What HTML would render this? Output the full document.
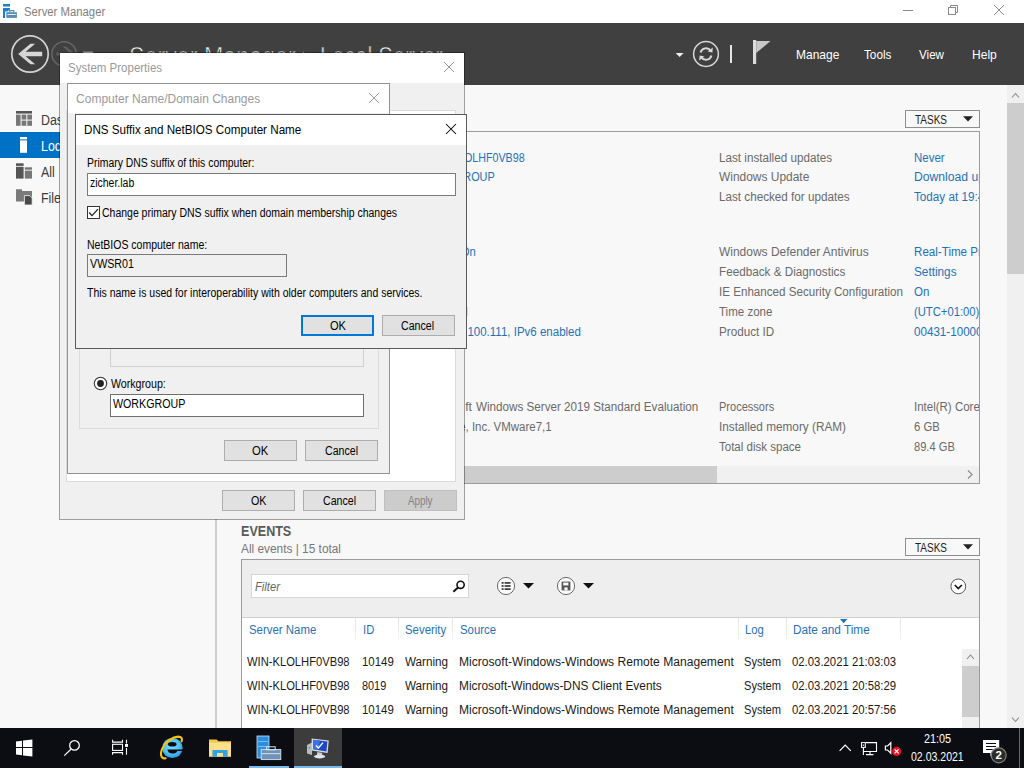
<!DOCTYPE html>
<html><head><meta charset="utf-8"><title>Server Manager</title>
<style>
*{box-sizing:border-box;margin:0;padding:0}
html,body{width:1024px;height:768px;overflow:hidden;background:#f8f8f8;font-family:"Liberation Sans",sans-serif;}
.a{position:absolute}
.t{position:absolute;white-space:nowrap;line-height:1}
svg{position:absolute;overflow:visible}
.btn{position:absolute;background:#e1e1e1;border:1px solid #adadad}
</style></head><body>

<!-- ===== main window ===== -->
<div class="a" style="left:0;top:0;width:1024px;height:23px;background:#fff"></div>
<!-- app icon -->
<svg style="left:0;top:0" width="20" height="22" viewBox="0 0 20 22">
<rect x="3" y="4" width="7" height="2.5" fill="#1b7fd0"/>
<path d="M3 8 H10 V9.4 L7.2 11.6 H5 V17.9 H3 Z" fill="#1b7fd0"/>
<rect x="6.3" y="12.2" width="10.6" height="5.7" fill="#5a8db5"/>
<path d="M9.6 12.2 V10.6 H13.8 V12.2" fill="none" stroke="#5a8db5" stroke-width="1.1"/>
<path d="M7 14 H16.2 L15.4 15 H7.8 Z" fill="#e6eef5"/>
</svg>
<!-- window controls -->
<svg style="left:900px;top:0" width="124" height="23" viewBox="0 0 124 23" fill="none" stroke="#8a8a8a" stroke-width="1">
<path d="M3 10.5H13"/><rect x="48.5" y="7.5" width="7" height="7"/><path d="M50.5 7.5V5.5H57.5V12.5H55.5"/><path d="M94 5L104 15M104 5L94 15"/>
</svg>
<!-- header -->
<div class="a" style="left:0;top:23px;width:1024px;height:62px;background:#404040"></div>
<svg style="left:0;top:23px" width="320" height="62" viewBox="0 23 320 62">
<circle cx="30" cy="54" r="18.2" fill="none" stroke="#d2d2d2" stroke-width="1.7"/>
<path d="M18.2 54 L30.5 43.8 H35.2 L25.6 51.8 H42.2 V56.2 H25.6 L35.2 64.2 H30.5 Z" fill="#d6d6d6"/>
<circle cx="64.1" cy="53.9" r="12.2" fill="none" stroke="#666" stroke-width="1.5"/>
<path d="M75 54 L66 46.5 H62.6 L69.6 52.4 H56.5 V55.6 H69.6 L62.6 61.5 H66 Z" fill="#5e5e5e"/>
<path d="M82.5 51.7 H93.7 L88 57.4 Z" fill="#d4d4d4"/>
<path d="M302.8 51.4 L309.4 58 L302.8 64.6 Z" fill="#dcdcdc"/>
</svg>
<svg style="left:664px;top:23px" width="128" height="62" viewBox="664 23 128 62">
<path d="M675.6 53 H683.6 L679.6 57 Z" fill="#f0f0f0"/>
<circle cx="706" cy="54" r="12.4" fill="none" stroke="#d8d8d8" stroke-width="1.5"/>
<path d="M700.6 52.6 A5.6 5.6 0 0 1 710.6 50.6" fill="none" stroke="#d8d8d8" stroke-width="2"/>
<path d="M711.4 55.4 A5.6 5.6 0 0 1 701.4 57.4" fill="none" stroke="#d8d8d8" stroke-width="2"/>
<path d="M712.8 47.4 L712.4 52.6 L707.6 51.4 Z" fill="#d8d8d8"/>
<path d="M699.2 60.6 L699.6 55.4 L704.4 56.6 Z" fill="#d8d8d8"/>
<rect x="730" y="45" width="2" height="18" fill="#e6e6e6"/>
<rect x="753" y="40" width="3.2" height="24" fill="#dcdcdc"/>
<path d="M756.2 41 H770.5 L756.2 53 Z" fill="#c8c8c8"/>
</svg>
<div class="a" style="left:217px;top:85px;width:790px;height:1px;background:#fcfcfc"></div>
<!-- sidebar -->
<div class="a" style="left:0;top:132px;width:215px;height:26px;background:#0072c6"></div>
<div class="a" style="left:215px;top:85px;width:2px;height:643px;background:#cdcdcd"></div>
<svg style="left:16px;top:111px" width="16" height="95" viewBox="16 111 16 95">
<!-- dashboard -->
<rect x="16" y="111" width="16" height="2.6" fill="#555"/>
<rect x="16" y="114.6" width="4.6" height="11.2" fill="#777"/><rect x="21.6" y="114.6" width="4.7" height="5" fill="#777"/><rect x="27.3" y="114.6" width="4.7" height="5" fill="#777"/><rect x="21.6" y="120.6" width="4.7" height="5.2" fill="#777"/><rect x="27.3" y="120.6" width="4.7" height="5.2" fill="#777"/>
<!-- local -->
<rect x="20" y="137" width="7" height="2.4" fill="#fff"/><rect x="20" y="140.4" width="7" height="12.4" fill="#fff"/>
<!-- all servers -->
<rect x="16" y="163.3" width="7.6" height="2.6" fill="#555"/><rect x="16" y="166.8" width="7.6" height="11.8" fill="#555"/>
<rect x="24.8" y="167.3" width="7.2" height="2.4" fill="#777"/><rect x="24.8" y="170.6" width="7.2" height="8" fill="#777"/>
<!-- file -->
<path d="M16 189.3 H22 V191 H32 V201.5 H16 Z" fill="#7a7a7a"/>
<path d="M24.4 195.6 H29.8 L32.2 198 V205 H24.4 Z" fill="#4a4a4a" stroke="#f8f8f8" stroke-width="0.8"/>
</svg>
<!-- main scrollbar -->
<div class="a" style="left:1007px;top:85px;width:17px;height:643px;background:#f0f0f0"></div>
<div class="a" style="left:1007px;top:103px;width:17px;height:171px;background:#cdcdcd"></div>
<svg style="left:1007px;top:85px" width="17" height="643" viewBox="1007 85 17 643" fill="none" stroke="#8a8a8a" stroke-width="1.1">
<path d="M1012 97.5 L1015.5 93.5 L1019 97.5"/><path d="M1012 717.5 L1015.5 721.5 L1019 717.5"/>
</svg>
<!-- properties panel -->
<div class="a" style="left:236px;top:131px;width:744px;height:353px;border:1px solid #9b9b9b;background:#f8f8f8"></div>
<div class="a" style="left:237px;top:466px;width:742px;height:17px;background:#f0f0f0"></div>
<div class="a" style="left:254px;top:466px;width:463px;height:17px;background:#cdcdcd"></div>
<svg style="left:960px;top:466px" width="17" height="17" viewBox="0 0 17 17" fill="none" stroke="#8a8a8a" stroke-width="1.1"><path d="M8 4.5 L12 8.5 L8 12.5"/></svg>
<!-- TASKS buttons -->
<div class="a" style="left:905px;top:110px;width:75px;height:18px;border:1px solid #8e8e8e;background:#f8f8f8"></div>
<div class="a" style="left:905px;top:538px;width:75px;height:18px;border:1px solid #8e8e8e;background:#f8f8f8"></div>
<svg style="left:963px;top:116px" width="10" height="6" viewBox="0 0 10 6"><path d="M0 0.3H10L5 5.4Z" fill="#222"/></svg>
<svg style="left:963px;top:544px" width="10" height="6" viewBox="0 0 10 6"><path d="M0 0.3H10L5 5.4Z" fill="#222"/></svg>
<!-- events box -->
<div class="a" style="left:241px;top:559px;width:739px;height:170px;border:1px solid #9b9b9b;background:#fff"></div>
<div class="a" style="left:242px;top:560px;width:737px;height:58px;background:#eeeeee;border-bottom:1px solid #cfcfcf"></div>
<div class="a" style="left:251px;top:574px;width:218px;height:24px;background:#fff;border:1px solid #d6d6d6"></div>
<svg style="left:452px;top:580px" width="14" height="13" viewBox="0 0 14 13" fill="none" stroke="#111" stroke-width="1.6"><circle cx="8.6" cy="4.8" r="3.6"/><path d="M6 7.6 L1.4 11.8" stroke-width="2"/></svg>
<svg style="left:496px;top:576px" width="110" height="20" viewBox="496 576 110 20">
<circle cx="506" cy="586" r="8.6" fill="#fafafa" stroke="#6a6a6a" stroke-width="1"/>
<g fill="#444"><rect x="501.6" y="582" width="2" height="1.8"/><rect x="504.6" y="582" width="6" height="1.8"/><rect x="501.6" y="585.1" width="2" height="1.8"/><rect x="504.6" y="585.1" width="6" height="1.8"/><rect x="501.6" y="588.2" width="2" height="1.8"/><rect x="504.6" y="588.2" width="6" height="1.8"/></g>
<path d="M523 583 H534 L528.5 588.6 Z" fill="#111"/>
<circle cx="566" cy="586" r="8.6" fill="#fafafa" stroke="#6a6a6a" stroke-width="1"/>
<path d="M561.6 581.6 H570.4 V590.4 H561.6 Z" fill="#555"/><rect x="563.2" y="582.6" width="5.2" height="2.8" fill="#fafafa"/><rect x="564.4" y="587.4" width="3.2" height="3" fill="#fafafa"/>
<path d="M583 583 H594 L588.5 588.6 Z" fill="#111"/>
</svg>
<svg style="left:948px;top:577px" width="20" height="20" viewBox="948 577 20 20"><circle cx="958.3" cy="586.4" r="7.4" fill="#fff" stroke="#555" stroke-width="1"/><path d="M954.8 585 L958.3 588.6 L961.8 585" fill="none" stroke="#111" stroke-width="1.6"/></svg>
<!-- column separators -->
<div class="a" style="left:355px;top:618px;width:1px;height:22px;background:linear-gradient(#e3e3e3,#f4f4f4)"></div>
<div class="a" style="left:398px;top:618px;width:1px;height:22px;background:linear-gradient(#e3e3e3,#f4f4f4)"></div>
<div class="a" style="left:452px;top:618px;width:1px;height:22px;background:linear-gradient(#e3e3e3,#f4f4f4)"></div>
<div class="a" style="left:738px;top:618px;width:1px;height:22px;background:linear-gradient(#e3e3e3,#f4f4f4)"></div>
<div class="a" style="left:786px;top:618px;width:1px;height:22px;background:linear-gradient(#e3e3e3,#f4f4f4)"></div>
<div class="a" style="left:900px;top:618px;width:1px;height:22px;background:linear-gradient(#e3e3e3,#f4f4f4)"></div>
<svg style="left:840px;top:619px" width="8" height="5" viewBox="0 0 8 5"><path d="M0 0H7.4L3.7 4.2Z" fill="#1f72b8"/></svg>
<!-- inner scrollbar -->
<div class="a" style="left:962px;top:649px;width:17px;height:79px;background:#f0f0f0"></div>
<div class="a" style="left:962px;top:666px;width:17px;height:51px;background:#cdcdcd"></div>
<svg style="left:962px;top:649px" width="17" height="17" viewBox="0 0 17 17" fill="none" stroke="#8a8a8a" stroke-width="1.1"><path d="M5 10 L8.5 6 L12 10"/></svg>
<!-- ===== taskbar ===== -->
<div class="a" style="left:0;top:728px;width:1024px;height:40px;background:#0b0d13"></div>
<div class="a" style="left:294px;top:728px;width:48px;height:38px;background:#3c3c3c"></div>
<div class="a" style="left:249px;top:766px;width:40px;height:2px;background:#76b9ed"></div>
<div class="a" style="left:294px;top:766px;width:48px;height:2px;background:#76b9ed"></div>
<!-- start -->
<svg style="left:15px;top:739px" width="18" height="18" viewBox="15 739 18 18" fill="#fff">
<path d="M16 741.5 L22 740.7 V747 H16Z"/><path d="M23 740.55 L32.4 739.6 V747 H23Z"/><path d="M16 748 H22 V755.3 L16 754.5Z"/><path d="M23 748 H32.4 V756.4 L23 755.45Z"/>
</svg>
<!-- search -->
<svg style="left:62px;top:738px" width="20" height="20" viewBox="62 738 20 20" fill="none" stroke="#fff" stroke-width="1.25"><circle cx="74.5" cy="745.4" r="4.8"/><path d="M70.9 749.2 L64.3 755.6"/></svg>
<!-- task view -->
<svg style="left:110px;top:738px" width="20" height="19" viewBox="110 738 20 19" fill="none" stroke="#fff" stroke-width="1.1">
<path d="M112.6 739.8 V742.1 H122.5 V739.8"/><rect x="112.6" y="744.3" width="9.9" height="6.1"/><path d="M112.6 754.8 V752.6 H122.5 V754.8"/>
<path d="M126.5 739.8 V743.6 M126.5 748 V754.8"/><rect x="125" y="744" width="3" height="2.9" fill="#fff" stroke="none"/>
</svg>
<!-- IE -->
<svg style="left:156px;top:732px" width="32" height="32" viewBox="156 732 32 32">
<defs><radialGradient id="ieg" cx="0.45" cy="0.4" r="0.65"><stop offset="0" stop-color="#7fe0fb"/><stop offset="0.6" stop-color="#4cc0f4"/><stop offset="1" stop-color="#2a8fe2"/></radialGradient></defs>
<ellipse cx="172.4" cy="748" rx="10.2" ry="10.1" fill="url(#ieg)"/>
<ellipse cx="172.2" cy="744.2" rx="4.3" ry="2.3" fill="#0b0d13"/>
<path d="M167.4 749.5 H183.2 V750.9 H177.4 C176.6 752.8 174.6 753.6 172.4 753.6 C169.6 753.6 167.6 751.8 167.4 749.5 Z" fill="#0b0d13"/>
<path d="M181.6 741.4 C182.6 738.6 181.4 736.6 178.2 736.6 C172.6 736.8 165.2 741.6 162.2 748.6 C160.4 753 160.6 757 163.4 758.2 C164 758.4 165 758.4 165.6 758.2" fill="none" stroke="#f4c20d" stroke-width="2.1" stroke-linecap="round"/>
</svg>
<!-- explorer -->
<svg style="left:208px;top:737px" width="25" height="21" viewBox="208 737 25 21">
<path d="M209 739.4 H216.6 L218.4 741.2 H231 V756.6 H209 Z" fill="#f7c64a"/>
<rect x="209" y="742.6" width="22" height="14" fill="#ffe08a"/>
<path d="M212.4 750 H227.6 V756.6 H212.4 Z" fill="#2ea3e8"/><rect x="217" y="753" width="6" height="3.6" fill="#ffe08a"/>
</svg>
<!-- server manager -->
<svg style="left:256px;top:735px" width="26" height="26" viewBox="256 735 26 26">
<rect x="257" y="736" width="12" height="22" fill="#2b8fe0" stroke="#cfe6f8" stroke-width="0.8"/><rect x="258.2" y="741" width="9.6" height="1" fill="#7fc0f0"/><rect x="258.2" y="746" width="9.6" height="1" fill="#7fc0f0"/>
<rect x="261.2" y="749.6" width="19.6" height="10" fill="#6f93b8" stroke="#d8e4ef" stroke-width="0.9"/><rect x="266.6" y="746.8" width="8.6" height="3" fill="none" stroke="#d8e4ef" stroke-width="1"/><rect x="261.6" y="753" width="18.8" height="1.2" fill="#c5d5e6"/>
</svg>
<!-- system properties icon -->
<svg style="left:305px;top:735px" width="26" height="25" viewBox="305 735 26 25">
<path d="M307 745 L312 742.4 V755 L307 753.4 Z" fill="#b8bcc0"/><rect x="308.6" y="747" width="1.6" height="1.6" fill="#4caf50"/>
<path d="M311.6 738.4 L328.8 740.4 L327.6 753 L311.8 750.4 Z" fill="#d9dde2"/>
<path d="M313 739.8 L327.4 741.4 L326.4 751.4 L313.2 749.2 Z" fill="#1b49c4"/>
<path d="M313 739.8 L320 740.6 L318 749.9 L313.2 749.2 Z" fill="#3a73e8"/>
<path d="M316 745.6 L318.4 748 L323 742.6" fill="none" stroke="#fff" stroke-width="1.4"/>
<path d="M317.4 752 L322 752.8 L322.6 755.4 L316.6 755.4 Z" fill="#c9cdd2"/><ellipse cx="319.6" cy="756.6" rx="5.6" ry="1.8" fill="#e1e4e8"/>
</svg>
<!-- tray -->
<svg style="left:836px;top:736px" width="188" height="28" viewBox="836 736 188 28" fill="none" stroke="#fff" stroke-width="1.2">
<path d="M839.6 750.8 L845.2 745.2 L850.8 750.8"/>
<path d="M865.6 742.6 H876.5 V751.5 H863.9" stroke-width="1.1"/><path d="M870 751.5 V754.5 M866 754.6 H873.4" stroke-width="1.1"/><rect x="861.5" y="742.6" width="3.8" height="4.8" fill="#0b0d13" stroke-width="1"/><path d="M863.4 747.4 V755" stroke-width="1.1"/><rect x="862.7" y="744.6" width="1.4" height="1.2" fill="#fff" stroke="none"/>
<path d="M885.4 746 H887.6 L890.8 742.8 V753.2 L887.6 750 H885.4 Z"/>
<circle cx="896.6" cy="751.4" r="4.6" fill="#e81123" stroke="none"/><path d="M894.6 749.4 L898.6 753.4 M898.6 749.4 L894.6 753.4" stroke-width="1.3"/>
<path d="M983 740 H999.2 V753 H994 L990.4 756.4 V753 H983 Z" fill="#fff" stroke="none"/>
<path d="M986 743.5 H996 M986 746.5 H996 M986 749.5 H992.6" stroke="#0b0d13" stroke-width="1"/>
<circle cx="998.7" cy="755.3" r="7.5" fill="#2b2b2b" stroke="#808080" stroke-width="1.2"/>
<path d="M1019.5 728 V768" stroke="#6a6a6a" stroke-width="1"/>
</svg>

<div class="t" style="top:6.29px;font-size:12.5px;color:#808080;left:23.50px;transform-origin:0 50%;transform:scaleX(0.9066);">Server Manager</div>
<div class="t" style="top:48.15px;font-size:13px;color:#fff;left:796.00px;transform-origin:0 50%;transform:scaleX(0.9216);">Manage</div>
<div class="t" style="top:48.15px;font-size:13px;color:#fff;left:864.40px;transform-origin:0 50%;transform:scaleX(0.9025);">Tools</div>
<div class="t" style="top:48.15px;font-size:13px;color:#fff;left:918.80px;transform-origin:0 50%;transform:scaleX(0.8944);">View</div>
<div class="t" style="top:48.15px;font-size:13px;color:#fff;left:971.50px;transform-origin:0 50%;transform:scaleX(0.9271);">Help</div>
<div class="t" style="top:44.49px;font-size:25px;color:#f0f0f0;-webkit-text-stroke:0.7px #404040;left:129.30px;transform-origin:0 50%;transform:scaleX(0.9300);">Server Manager</div>
<div class="t" style="top:44.49px;font-size:25px;color:#f0f0f0;-webkit-text-stroke:0.7px #404040;left:320.30px;transform-origin:0 50%;transform:scaleX(0.8742);">Local Server</div>
<div class="t" style="top:112.23px;font-size:15.5px;color:#3c3c3c;left:40.60px;transform-origin:0 50%;transform:scaleX(0.8000);">Dashboard</div>
<div class="t" style="top:138.23px;font-size:15.5px;color:#fff;left:40.60px;transform-origin:0 50%;transform:scaleX(0.8000);">Local Server</div>
<div class="t" style="top:164.23px;font-size:15.5px;color:#3c3c3c;left:40.60px;transform-origin:0 50%;transform:scaleX(0.8000);">All</div>
<div class="t" style="top:190.23px;font-size:15.5px;color:#3c3c3c;left:40.60px;transform-origin:0 50%;transform:scaleX(0.8000);">File and Storage Services</div>
<div class="t" style="top:151.69px;font-size:12.5px;color:#6a6a6a;left:719.00px;transform-origin:0 50%;transform:scaleX(0.9345);">Last installed updates</div>
<div class="a" style="left:0;top:0;width:979px;height:768px;overflow:hidden"><div class="t" style="top:151.69px;font-size:12.5px;color:#1f72b8;left:914.00px;transform-origin:0 50%;transform:scaleX(0.9180);">Never</div></div>
<div class="t" style="top:170.69px;font-size:12.5px;color:#6a6a6a;left:719.00px;transform-origin:0 50%;transform:scaleX(0.9556);">Windows Update</div>
<div class="a" style="left:0;top:0;width:979px;height:768px;overflow:hidden"><div class="t" style="top:170.69px;font-size:12.5px;color:#1f72b8;left:914.00px;transform-origin:0 50%;transform:scaleX(0.9730);">Download updates only, using Windows Update</div></div>
<div class="t" style="top:190.69px;font-size:12.5px;color:#6a6a6a;left:719.00px;transform-origin:0 50%;transform:scaleX(0.9349);">Last checked for updates</div>
<div class="a" style="left:0;top:0;width:979px;height:768px;overflow:hidden"><div class="t" style="top:190.69px;font-size:12.5px;color:#1f72b8;left:914.00px;transform-origin:0 50%;transform:scaleX(0.9350);">Today at 19:46</div></div>
<div class="t" style="top:245.89px;font-size:12.5px;color:#6a6a6a;left:719.00px;transform-origin:0 50%;transform:scaleX(0.9576);">Windows Defender Antivirus</div>
<div class="a" style="left:0;top:0;width:979px;height:768px;overflow:hidden"><div class="t" style="top:245.89px;font-size:12.5px;color:#1f72b8;left:914.00px;transform-origin:0 50%;transform:scaleX(0.9280);">Real-Time Protection: On</div></div>
<div class="t" style="top:265.69px;font-size:12.5px;color:#6a6a6a;left:719.00px;transform-origin:0 50%;transform:scaleX(0.9366);">Feedback &amp; Diagnostics</div>
<div class="a" style="left:0;top:0;width:979px;height:768px;overflow:hidden"><div class="t" style="top:265.69px;font-size:12.5px;color:#1f72b8;left:914.00px;transform-origin:0 50%;transform:scaleX(0.9420);">Settings</div></div>
<div class="t" style="top:285.69px;font-size:12.5px;color:#6a6a6a;left:719.00px;transform-origin:0 50%;transform:scaleX(0.9291);">IE Enhanced Security Configuration</div>
<div class="a" style="left:0;top:0;width:979px;height:768px;overflow:hidden"><div class="t" style="top:285.69px;font-size:12.5px;color:#1f72b8;left:914.00px;transform-origin:0 50%;transform:scaleX(0.9200);">On</div></div>
<div class="t" style="top:305.69px;font-size:12.5px;color:#6a6a6a;left:719.00px;transform-origin:0 50%;transform:scaleX(0.9222);">Time zone</div>
<div class="a" style="left:0;top:0;width:979px;height:768px;overflow:hidden"><div class="t" style="top:305.69px;font-size:12.5px;color:#1f72b8;left:914.00px;transform-origin:0 50%;transform:scaleX(0.9000);">(UTC+01:00) Amsterdam, Berlin, Bern, Rome</div></div>
<div class="t" style="top:325.69px;font-size:12.5px;color:#6a6a6a;left:719.00px;transform-origin:0 50%;transform:scaleX(0.9363);">Product ID</div>
<div class="a" style="left:0;top:0;width:979px;height:768px;overflow:hidden"><div class="t" style="top:325.69px;font-size:12.5px;color:#1f72b8;left:914.00px;transform-origin:0 50%;transform:scaleX(0.9300);">00431-10000-00000-AA661 (activated)</div></div>
<div class="t" style="top:400.89px;font-size:12.5px;color:#6a6a6a;left:719.00px;transform-origin:0 50%;transform:scaleX(0.8828);">Processors</div>
<div class="a" style="left:0;top:0;width:979px;height:768px;overflow:hidden"><div class="t" style="top:400.89px;font-size:12.5px;color:#6a6a6a;left:914.00px;transform-origin:0 50%;transform:scaleX(0.9200);">Intel(R) Core(TM) i7-8700 CPU @ 3.20GHz</div></div>
<div class="t" style="top:420.89px;font-size:12.5px;color:#6a6a6a;left:719.00px;transform-origin:0 50%;transform:scaleX(0.9425);">Installed memory (RAM)</div>
<div class="a" style="left:0;top:0;width:979px;height:768px;overflow:hidden"><div class="t" style="top:420.89px;font-size:12.5px;color:#6a6a6a;left:914.00px;transform-origin:0 50%;transform:scaleX(0.9000);">6 GB</div></div>
<div class="t" style="top:440.89px;font-size:12.5px;color:#6a6a6a;left:719.00px;transform-origin:0 50%;transform:scaleX(0.9220);">Total disk space</div>
<div class="a" style="left:0;top:0;width:979px;height:768px;overflow:hidden"><div class="t" style="top:440.89px;font-size:12.5px;color:#6a6a6a;left:914.00px;transform-origin:0 50%;transform:scaleX(0.8900);">89.4 GB</div></div>
<div class="t" style="top:151.69px;font-size:12.5px;color:#1f72b8;right:499.00px;transform-origin:100% 50%;transform:scaleX(0.8560);">WIN-KLOLHF0VB98</div>
<div class="t" style="top:170.69px;font-size:12.5px;color:#1f72b8;right:529.00px;transform-origin:100% 50%;transform:scaleX(0.8700);">WORKGROUP</div>
<div class="t" style="top:245.89px;font-size:12.5px;color:#1f72b8;right:548.70px;transform-origin:100% 50%;transform:scaleX(0.9000);">Public: On</div>
<div class="t" style="top:265.69px;font-size:12.5px;color:#1f72b8;right:561.00px;transform-origin:100% 50%;transform:scaleX(0.9000);">Enabled</div>
<div class="t" style="top:305.69px;font-size:12.5px;color:#1f72b8;right:556.00px;transform-origin:100% 50%;transform:scaleX(0.9000);">Disabled</div>
<div class="t" style="top:325.69px;font-size:12.5px;color:#1f72b8;right:443.00px;transform-origin:100% 50%;transform:scaleX(0.9210);">192.168.100.111, IPv6 enabled</div>
<div class="t" style="top:400.89px;font-size:12.5px;color:#6a6a6a;left:476.20px;transform-origin:0 50%;transform:scaleX(0.9327);">Windows Server 2019 Standard Evaluation</div>
<div class="t" style="top:400.89px;font-size:12.5px;color:#6a6a6a;right:551.80px;transform-origin:100% 50%;transform:scaleX(0.9800);">ft</div>
<div class="t" style="top:420.89px;font-size:12.5px;color:#6a6a6a;right:472.20px;transform-origin:100% 50%;transform:scaleX(0.9180);">VMware, Inc. VMware7,1</div>
<div class="t" style="top:114.29px;font-size:12.5px;color:#222;left:915.00px;transform-origin:0 50%;transform:scaleX(0.7988);">TASKS</div>
<div class="t" style="top:542.09px;font-size:12.5px;color:#222;left:915.00px;transform-origin:0 50%;transform:scaleX(0.7988);">TASKS</div>
<div class="t" style="top:524.46px;font-size:14px;color:#5a5a5a;font-weight:700;left:240.75px;transform-origin:0 50%;transform:scaleX(0.8971);">EVENTS</div>
<div class="t" style="top:542.89px;font-size:12.5px;color:#777;left:240.75px;transform-origin:0 50%;transform:scaleX(0.9489);">All events | 15 total</div>
<div class="t" style="top:581.29px;font-size:12.5px;color:#666;font-style:italic;left:255.00px;transform-origin:0 50%;transform:scaleX(0.9000);">Filter</div>
<div class="t" style="top:623.89px;font-size:12.5px;color:#1f72b8;left:248.50px;transform-origin:0 50%;transform:scaleX(0.9132);">Server Name</div>
<div class="t" style="top:623.89px;font-size:12.5px;color:#1f72b8;left:362.75px;transform-origin:0 50%;transform:scaleX(0.9000);">ID</div>
<div class="t" style="top:623.89px;font-size:12.5px;color:#1f72b8;left:405.25px;transform-origin:0 50%;transform:scaleX(0.9135);">Severity</div>
<div class="t" style="top:623.89px;font-size:12.5px;color:#1f72b8;left:459.50px;transform-origin:0 50%;transform:scaleX(0.9089);">Source</div>
<div class="t" style="top:623.89px;font-size:12.5px;color:#1f72b8;left:745.30px;transform-origin:0 50%;transform:scaleX(0.9000);">Log</div>
<div class="t" style="top:623.89px;font-size:12.5px;color:#1f72b8;left:793.00px;transform-origin:0 50%;transform:scaleX(0.9435);">Date and Time</div>
<div class="t" style="top:655.69px;font-size:12.5px;color:#1a1a1a;left:246.90px;transform-origin:0 50%;transform:scaleX(0.8951);">WIN-KLOLHF0VB98</div>
<div class="t" style="top:655.69px;font-size:12.5px;color:#1a1a1a;left:362.00px;transform-origin:0 50%;transform:scaleX(0.9133);">10149</div>
<div class="t" style="top:655.69px;font-size:12.5px;color:#1a1a1a;left:404.50px;transform-origin:0 50%;transform:scaleX(0.9329);">Warning</div>
<div class="t" style="top:655.69px;font-size:12.5px;color:#1a1a1a;left:459.00px;transform-origin:0 50%;transform:scaleX(0.9670);">Microsoft-Windows-Windows Remote Management</div>
<div class="t" style="top:655.69px;font-size:12.5px;color:#1a1a1a;left:744.00px;transform-origin:0 50%;transform:scaleX(0.8876);">System</div>
<div class="t" style="top:655.69px;font-size:12.5px;color:#1a1a1a;left:791.60px;transform-origin:0 50%;transform:scaleX(0.9076);">02.03.2021 21:03:03</div>
<div class="t" style="top:679.69px;font-size:12.5px;color:#1a1a1a;left:246.90px;transform-origin:0 50%;transform:scaleX(0.8951);">WIN-KLOLHF0VB98</div>
<div class="t" style="top:679.69px;font-size:12.5px;color:#1a1a1a;left:362.00px;transform-origin:0 50%;transform:scaleX(0.8700);">8019</div>
<div class="t" style="top:679.69px;font-size:12.5px;color:#1a1a1a;left:404.50px;transform-origin:0 50%;transform:scaleX(0.9329);">Warning</div>
<div class="t" style="top:679.69px;font-size:12.5px;color:#1a1a1a;left:459.00px;transform-origin:0 50%;transform:scaleX(0.9508);">Microsoft-Windows-DNS Client Events</div>
<div class="t" style="top:679.69px;font-size:12.5px;color:#1a1a1a;left:744.00px;transform-origin:0 50%;transform:scaleX(0.8876);">System</div>
<div class="t" style="top:679.69px;font-size:12.5px;color:#1a1a1a;left:791.60px;transform-origin:0 50%;transform:scaleX(0.9076);">02.03.2021 20:58:29</div>
<div class="t" style="top:703.69px;font-size:12.5px;color:#1a1a1a;left:246.90px;transform-origin:0 50%;transform:scaleX(0.8951);">WIN-KLOLHF0VB98</div>
<div class="t" style="top:703.69px;font-size:12.5px;color:#1a1a1a;left:362.00px;transform-origin:0 50%;transform:scaleX(0.9133);">10149</div>
<div class="t" style="top:703.69px;font-size:12.5px;color:#1a1a1a;left:404.50px;transform-origin:0 50%;transform:scaleX(0.9329);">Warning</div>
<div class="t" style="top:703.69px;font-size:12.5px;color:#1a1a1a;left:459.00px;transform-origin:0 50%;transform:scaleX(0.9670);">Microsoft-Windows-Windows Remote Management</div>
<div class="t" style="top:703.69px;font-size:12.5px;color:#1a1a1a;left:744.00px;transform-origin:0 50%;transform:scaleX(0.8876);">System</div>
<div class="t" style="top:703.69px;font-size:12.5px;color:#1a1a1a;left:791.60px;transform-origin:0 50%;transform:scaleX(0.9076);">02.03.2021 20:57:56</div>
<div class="t" style="top:732.94px;font-size:12px;color:#fff;left:924.20px;transform-origin:0 50%;transform:scaleX(0.9024);">21:05</div>
<div class="t" style="top:750.94px;font-size:12px;color:#fff;left:911.30px;transform-origin:0 50%;transform:scaleX(0.8774);">02.03.2021</div>
<div class="t" style="top:749.98px;font-size:11.5px;color:#fff;font-weight:700;left:995.50px;transform-origin:0 50%;">2</div>
<!-- ===== System Properties ===== -->
<div class="a" style="left:59px;top:52px;width:406px;height:468px;background:#f0f0f0;border:1px solid rgba(0,0,0,0.36);background-clip:padding-box"></div>
<div class="a" style="left:60px;top:53px;width:404px;height:30px;background:#fff"></div>
<svg style="left:443px;top:61px" width="12" height="12" viewBox="0 0 12 12" fill="none" stroke="#9a9a9a" stroke-width="1"><path d="M1 1L11 11M11 1L1 11"/></svg>
<!-- tab page -->
<div class="a" style="left:66px;top:110px;width:390px;height:372px;background:#fff;border:1px solid #dcdcdc"></div>
<div class="btn" style="left:222px;top:490px;width:73px;height:21px"></div>
<div class="btn" style="left:303px;top:490px;width:73px;height:21px"></div>
<div class="btn" style="left:384px;top:490px;width:73px;height:21px;background:#cccccc;border-color:#bfbfbf"></div>

<div class="t" style="top:62.14px;font-size:12px;color:#9a9a9a;left:67.70px;transform-origin:0 50%;transform:scaleX(0.9592);">System Properties</div>
<div class="t" style="top:494.94px;font-size:12px;color:#000;left:250.50px;transform-origin:0 50%;transform:scaleX(0.8937);">OK</div>
<div class="t" style="top:494.94px;font-size:12px;color:#000;left:322.50px;transform-origin:0 50%;transform:scaleX(0.8833);">Cancel</div>
<div class="t" style="top:494.94px;font-size:12px;color:#838383;left:407.50px;transform-origin:0 50%;transform:scaleX(0.8158);">Apply</div>
<!-- ===== Computer Name/Domain Changes ===== -->
<div class="a" style="left:67px;top:83px;width:323px;height:391px;background:#f0f0f0;border:1px solid #929292"></div>
<div class="a" style="left:68px;top:84px;width:321px;height:29px;background:#fff"></div>
<svg style="left:368px;top:92px" width="12" height="12" viewBox="0 0 12 12" fill="none" stroke="#9a9a9a" stroke-width="1"><path d="M1 1L11 11M11 1L1 11"/></svg>
<!-- groupbox -->
<div class="a" style="left:79px;top:230px;width:300px;height:199px;border:1px solid #dcdcdc"></div>
<!-- disabled domain textbox -->
<div class="a" style="left:110px;top:344px;width:254px;height:23px;border:1px solid #d0d0d0;background:#f0f0f0"></div>
<!-- radio -->
<svg style="left:93px;top:376px" width="15" height="15" viewBox="0 0 15 15"><circle cx="7.5" cy="7.5" r="6.2" fill="#fff" stroke="#333" stroke-width="1.1"/><circle cx="7.5" cy="7.5" r="3.4" fill="#222"/></svg>
<div class="a" style="left:110px;top:394px;width:254px;height:23px;border:1px solid #6e6e6e;background:#fff"></div>
<div class="btn" style="left:224px;top:440px;width:73px;height:21px"></div>
<div class="btn" style="left:305px;top:440px;width:73px;height:21px"></div>

<div class="t" style="top:93.14px;font-size:12px;color:#9a9a9a;left:76.10px;transform-origin:0 50%;">Computer Name/Domain Changes</div>
<div class="t" style="top:378.00px;font-size:12px;color:#000;left:110.50px;transform-origin:0 50%;transform:scaleX(0.8857);">Workgroup:</div>
<div class="t" style="top:398.00px;font-size:12px;color:#000;left:113.00px;transform-origin:0 50%;transform:scaleX(0.8882);">WORKGROUP</div>
<div class="t" style="top:444.94px;font-size:12px;color:#000;left:252.25px;transform-origin:0 50%;transform:scaleX(0.9369);">OK</div>
<div class="t" style="top:444.94px;font-size:12px;color:#000;left:324.50px;transform-origin:0 50%;transform:scaleX(0.8833);">Cancel</div>
<!-- ===== DNS Suffix dialog ===== -->
<div class="a" style="left:75px;top:114px;width:392px;height:235px;background:#f0f0f0;border:1px solid #5a5a5a"></div>
<div class="a" style="left:76px;top:115px;width:390px;height:30px;background:#fff"></div>
<svg style="left:445px;top:123px" width="12" height="12" viewBox="0 0 12 12" fill="none" stroke="#000" stroke-width="1.05"><path d="M1 1L11 11M11 1L1 11"/></svg>
<div class="a" style="left:87px;top:173px;width:369px;height:23px;border:1px solid #7a7a7a;background:#fff"></div>
<div class="a" style="left:87px;top:206px;width:13px;height:13px;border:1px solid #333;background:#fff"></div>
<svg style="left:87px;top:206px" width="13" height="13" viewBox="0 0 13 13" fill="none" stroke="#222" stroke-width="1.3"><path d="M2.2 6.5 L5 9.6 L11 3.1"/></svg>
<div class="a" style="left:87px;top:254px;width:200px;height:23px;border:1px solid #7a7a7a;background:#f0f0f0"></div>
<div class="btn" style="left:301px;top:315px;width:73px;height:21px;border:2px solid #0078d7"></div>
<div class="btn" style="left:382px;top:315px;width:73px;height:21px"></div>

<div class="t" style="top:123.64px;font-size:12px;color:#000;left:83.70px;transform-origin:0 50%;transform:scaleX(0.9706);">DNS Suffix and NetBIOS Computer Name</div>
<div class="t" style="top:157.00px;font-size:12px;color:#000;left:86.80px;transform-origin:0 50%;transform:scaleX(0.8668);">Primary DNS suffix of this computer:</div>
<div class="t" style="top:177.00px;font-size:12px;color:#000;left:89.75px;transform-origin:0 50%;transform:scaleX(0.8727);">zicher.lab</div>
<div class="t" style="top:207.00px;font-size:12px;color:#000;left:102.40px;transform-origin:0 50%;transform:scaleX(0.8732);">Change primary DNS suffix when domain membership changes</div>
<div class="t" style="top:239.00px;font-size:12px;color:#000;left:86.80px;transform-origin:0 50%;transform:scaleX(0.8749);">NetBIOS computer name:</div>
<div class="t" style="top:258.00px;font-size:12px;color:#000;left:90.00px;transform-origin:0 50%;transform:scaleX(0.8914);">VWSR01</div>
<div class="t" style="top:287.00px;font-size:12px;color:#000;left:87.00px;transform-origin:0 50%;transform:scaleX(0.8733);">This name is used for interoperability with older computers and services.</div>
<div class="t" style="top:320.14px;font-size:12px;color:#000;left:329.50px;transform-origin:0 50%;transform:scaleX(0.9225);">OK</div>
<div class="t" style="top:320.14px;font-size:12px;color:#000;left:401.25px;transform-origin:0 50%;transform:scaleX(0.8833);">Cancel</div>
</body></html>
